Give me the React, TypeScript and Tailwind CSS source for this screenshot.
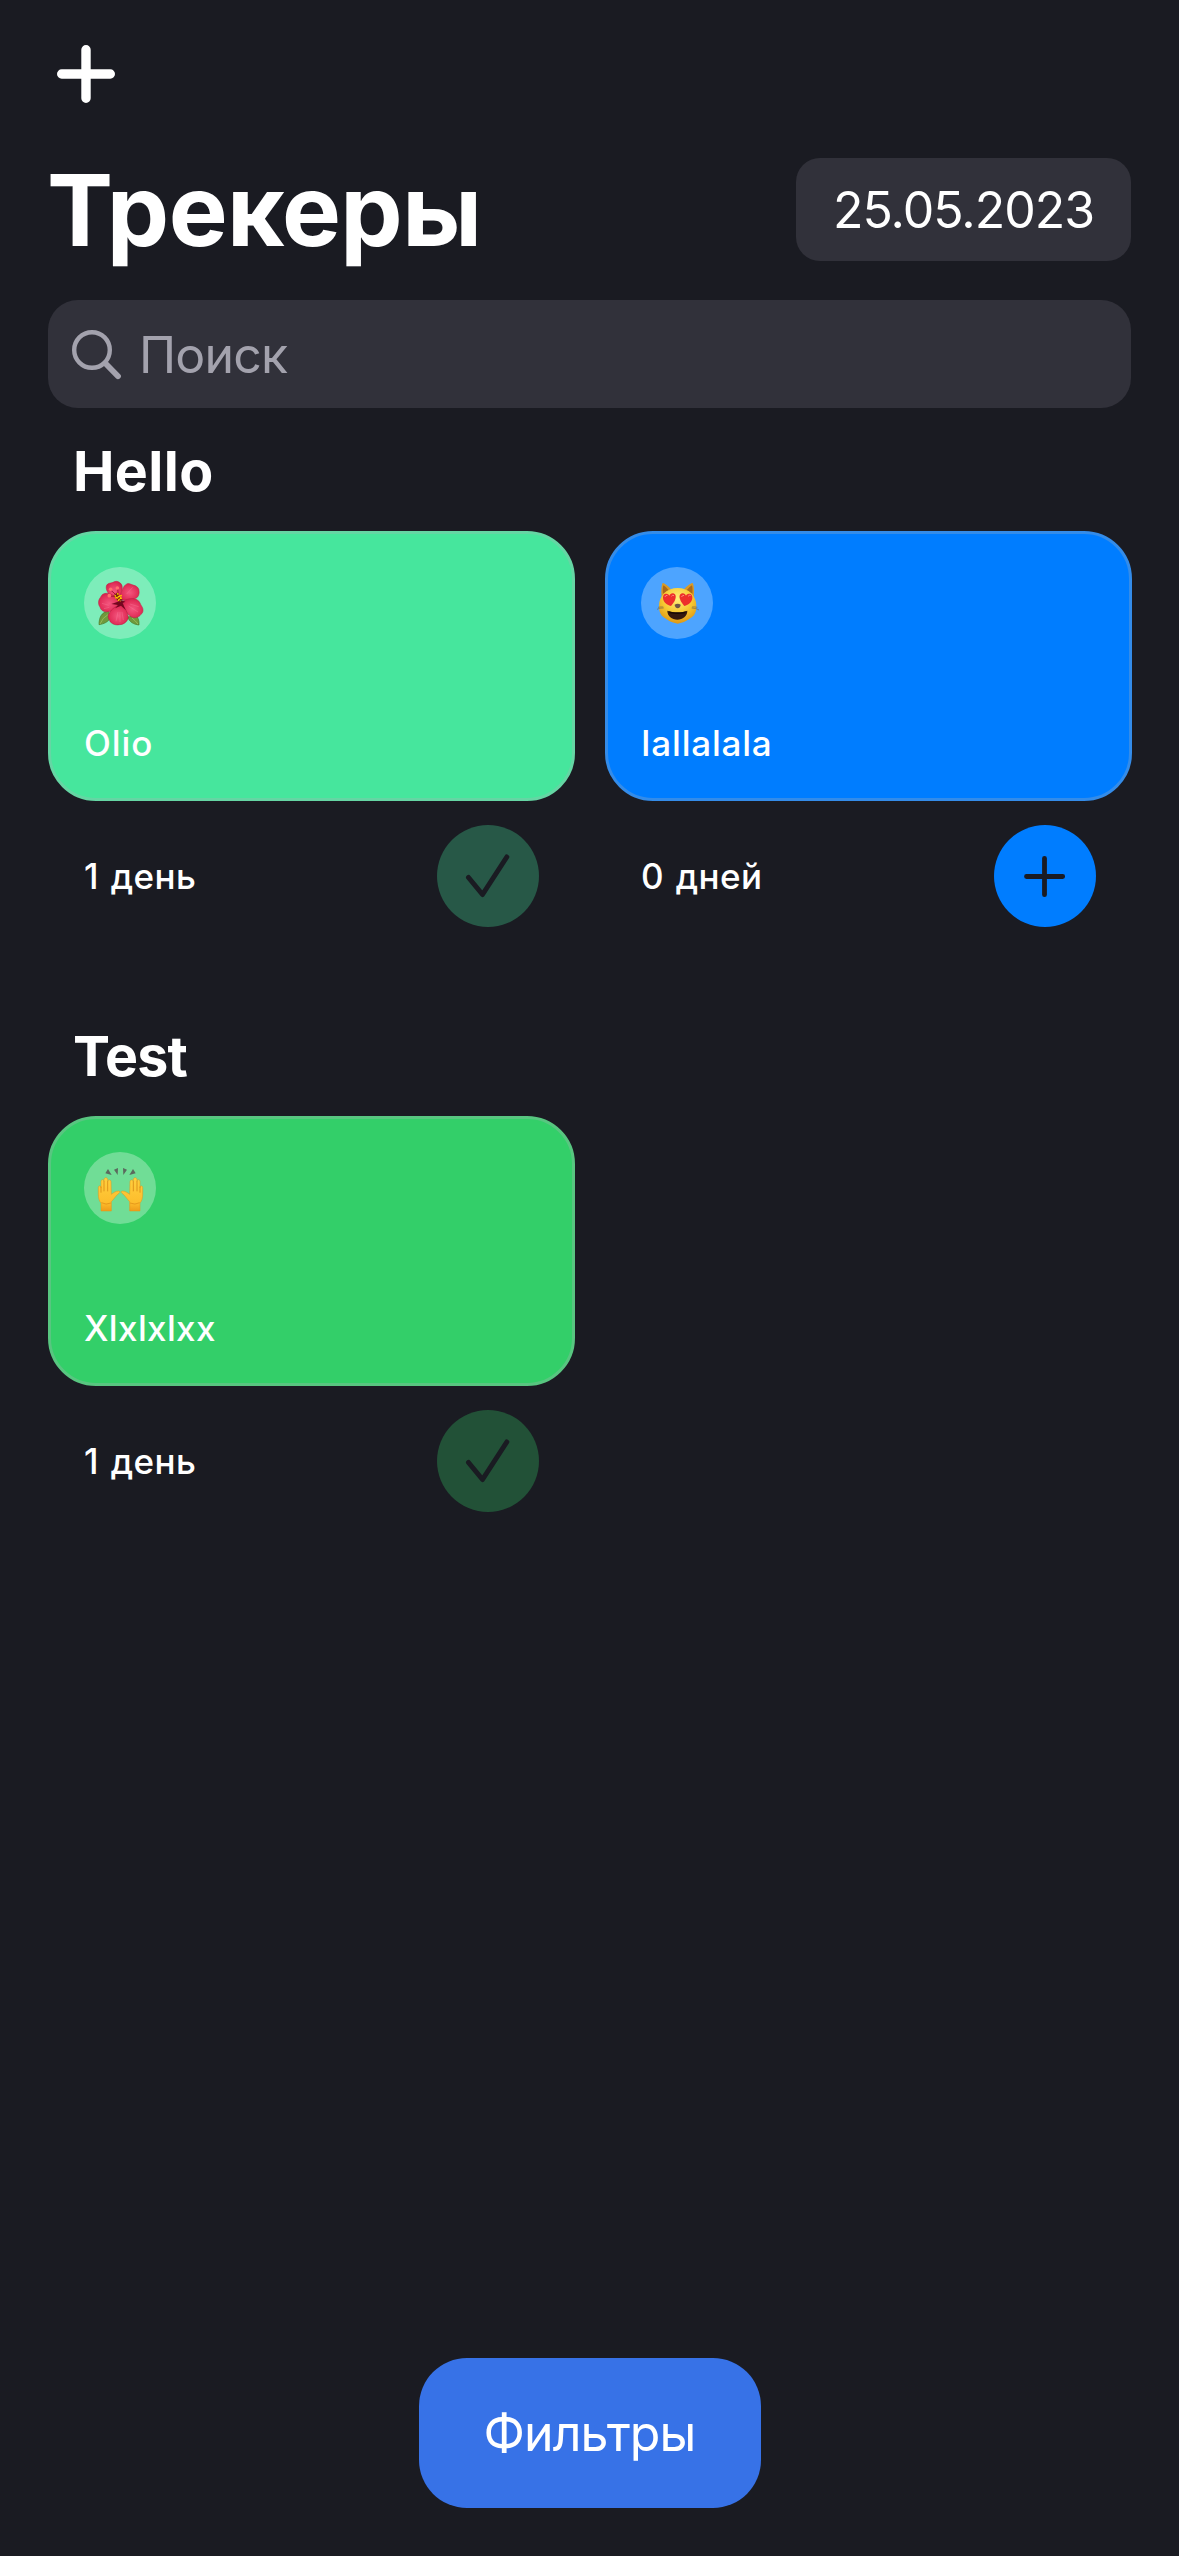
import React from "react";

function Hibiscus() {
  return (
    <svg className="size-full" viewBox="132 141 216 216">
      <defs>
        <radialGradient id="petal" cx="50%" cy="55%" r="60%">
          <stop offset="0" stopColor="#f4567f" />
          <stop offset="0.7" stopColor="#e2305a" />
          <stop offset="1" stopColor="#cf1f49" />
        </radialGradient>
      </defs>
      <path d="M177 314c0-22 8-38 28-40l8 18c-8 14-22 20-36 22z" fill="#6f9a3c" stroke="#4c7526" strokeWidth="2" />
      <path d="M297 315c1-14-3-24-10-28l-24 4c6 16 18 22 34 24z" fill="#6f9a3c" stroke="#4c7526" strokeWidth="2" />
      <path d="M180 312q8-20 24-28M294 312q-8-10-18-18" stroke="#a9c76a" strokeWidth="2" fill="none" />
      <path d="M237 240c-22-4-42-26-38-42 4-10 14-8 20-11 6-4 14-4 19 0 10 6 10 16 7 28z" fill="url(#petal)" stroke="#c31c45" strokeWidth="1.5" />
      <path d="M240 240c2-20 8-44 22-49 6-2 12 3 20 5 8 2 16 9 15 17 2 8-2 18-8 21-14 6-32 8-49 6z" fill="url(#petal)" stroke="#c31c45" strokeWidth="1.5" />
      <path d="M240 250c-10-22-32-34-48-29-8 2-9 10-14 16-4 8-3 18 2 24 2 10 12 16 24 14 14 0 28-10 36-25z" fill="url(#petal)" stroke="#c31c45" strokeWidth="1.5" />
      <path d="M246 246c12-10 34-14 46-6 8 4 8 12 14 20 5 8 4 18-3 23-6 10-18 12-28 8-14-8-24-26-29-45z" fill="url(#petal)" stroke="#c31c45" strokeWidth="1.5" />
      <path d="M243 254c-18 4-34 18-38 32-2 10 4 14 6 20 8 8 18 10 28 8 10 0 18-6 22-12 6-8 4-16 0-24-4-12-10-20-18-24z" fill="url(#petal)" stroke="#b8173e" strokeWidth="1.5" />
      <path d="M214 252l24-8 6-3 12 4-8 4 9 21-14-13-18 8 9-10z" fill="#74061f" />
      <g stroke="#f9819f" strokeWidth="1.5" fill="none" opacity="0.7">
        <path d="M234 276l-6 28M240 276v30M246 276l4 24M266 258l28 18M270 252l26 8M206 256l-20-6M208 262l-16 4M260 222l18-20" />
      </g>
      <path d="M212 210l20 18M208 228l22 2M233 206l2 20" stroke="#a81338" strokeWidth="3" />
      <circle cx="212" cy="208" r="5.5" fill="#ff6f6c" />
      <circle cx="232" cy="204" r="5.5" fill="#ff6f6c" />
      <circle cx="208" cy="227" r="5.5" fill="#ff6f6c" />
      <path d="M226 222l16 20" stroke="#7c1c12" strokeWidth="14" />
      <path d="M224 226l18 18M232 220l14 18M226 234l20-8M234 242l10-10" stroke="#ffc400" strokeWidth="4.5" strokeDasharray="5 3" />
    </svg>
  );
}

function HeartEyesCat() {
  return (
    <svg className="size-full" viewBox="153 141 216 216">
      <defs>
        <radialGradient id="fur" cx="50%" cy="30%" r="72%">
          <stop offset="0" stopColor="#fff07c" />
          <stop offset="0.55" stopColor="#f6c832" />
          <stop offset="1" stopColor="#dc9412" />
        </radialGradient>
      </defs>
      <path d="M215 232c-2-18-1-36 3-43 9 2 20 12 27 22z" fill="#d99a26" />
      <path d="M311 232c2-18 1-36-3-43-10 2-21 12-28 22z" fill="#d99a26" />
      <path d="M219 222c-1-10-1-20 1-26 6 3 12 10 16 15zM307 222c1-10 1-20-1-26-6 3-12 10-16 15z" fill="#a9691a" />
      <path d="M263 204c34 0 56 24 56 54 0 16-4 26-14 34-12 9-28 18-42 19-14-1-30-10-42-19-10-8-14-18-14-34 0-30 22-54 56-54z" fill="url(#fur)" />
      <path d="M201 268q8-5 20-4M204 262q8-2 16-1M327 270q-8-6-22-6M322 262q-8-2-16-1" stroke="#7a6a4c" strokeWidth="2" fill="none" />
      <path d="M243 258c-14-4-23-12-24-24-1-8 4-14 10-13 5 0 8 3 9 6 2-4 6-8 11-7 8 1 10 9 7 17-2 8-7 14-13 21z" fill="#ed2f2c" />
      <path d="M283 258c14-4 23-12 24-24 1-8-4-14-10-13-5 0-8 3-9 6-2-4-6-8-11-7-8 1-10 9-7 17 2 8 7 14 13 21z" fill="#ed2f2c" />
      <path d="M225 230q2-5 6-4M245 228q3-4 6-2M275 230q2-5 6-4M295 228q3-4 6-2" stroke="#ff8a80" strokeWidth="3" fill="none" strokeLinecap="round" />
      <path d="M254 254c5-4 13-4 18 0 0 6-4 10-9 11-5-1-9-5-9-11z" fill="#6e5647" />
      <path d="M232 272c18 6 44 6 60 0 0 16-14 27-30 27s-30-11-30-27z" fill="#35190f" />
      <path d="M236 274c16 5 38 5 52 0l-3 6c-14 3-32 3-46 0z" fill="#190a06" />
    </svg>
  );
}

function RaisedHands() {
  return (
    <svg className="size-full" viewBox="132 426 216 216">
      <defs>
        <linearGradient id="skin" x1="0" y1="0" x2="0" y2="1">
          <stop offset="0" stopColor="#ffcf3f" />
          <stop offset="0.75" stopColor="#fdbd2c" />
          <stop offset="1" stopColor="#ee9c1a" />
        </linearGradient>
        <g id="hand">
          <path
            d="M183 603v-24c-6-6-8-16-8-26v-20c0-7 8-7 8 0v-18c0-8 9-8 9 0v-6c0-8 11-8 11 0v6c0-7 10-7 10 0l1 38c5-4 13-10 22-10 4 1 5 4 1 7-8 5-13 15-23 25v28z"
            fill="url(#skin)"
            stroke="#e0951b"
            strokeWidth="1.5"
          />
          <path d="M183 530v18M192 514v30M203 514v30" stroke="#d98a17" strokeWidth="2.5" fill="none" />
          <path d="M184 578q14 8 29 1" stroke="#e79a1c" strokeWidth="3" fill="none" />
        </g>
      </defs>
      <path d="M204 477l11 18-19-5zM222 479l12-5-1 21zM249 474l12 5-11 16zM279 477l8 13-19 5z" fill="#5b6a5e" />
      <use href="#hand" />
      <use href="#hand" transform="translate(483 0) scale(-1 1)" />
    </svg>
  );
}

function CheckMark() {
  return (
    <svg className="size-full" viewBox="0 0 102 102" fill="none" stroke="#1a1b22" strokeWidth="5" strokeLinecap="round" strokeLinejoin="round">
      <path d="M31.5 52.5L45.5 69.5L69.8 32" />
    </svg>
  );
}

function PlusMark() {
  return (
    <svg className="size-full" viewBox="0 0 102 102" fill="none" stroke="#1a1b22" strokeWidth="4.8" strokeLinecap="round">
      <path d="M50.5 33.3V69.7M32.5 51.5H68.7" />
    </svg>
  );
}

type Tracker = {
  name: string;
  nameClass: string;
  days: string;
  card: string;
  button: string;
  emoji: React.ReactNode;
  done: boolean;
};

function TrackerCell({ t }: { t: Tracker }) {
  return (
    <article>
      <div className={`flex h-[270px] flex-col items-start justify-between rounded-[48px] border-3 px-[33px] pt-[33px] pb-[37px] ${t.card}`}>
        <div className="size-[72px] rounded-full bg-white/30">{t.emoji}</div>
        <div className={`text-[35px] leading-[36px] font-medium ${t.nameClass}`}>{t.name}</div>
      </div>
      <div className="mt-6 flex h-[102px] items-center justify-between px-9">
        <span className="text-[35px] leading-[36px] font-medium tracking-[0.4px] [word-spacing:2px]">{t.days}</span>
        <button className={`size-[102px] rounded-full ${t.button}`}>{t.done ? <CheckMark /> : <PlusMark />}</button>
      </div>
    </article>
  );
}

const sections: { title: string; titleClass: string; items: Tracker[] }[] = [
  {
    title: "Hello",
    titleClass: "tracking-[0.4px]",
    items: [
      {
        name: "Olio",
        nameClass: "tracking-[0.9px]",
        days: "1 день",
        card: "bg-[#46e69d] border-[#65d6a4]",
        button: "bg-[#275847]",
        emoji: <Hibiscus />,
        done: true,
      },
      {
        name: "Iallalala",
        nameClass: "tracking-[0.8px]",
        days: "0 дней",
        card: "bg-[#007dff] border-[#348ce9]",
        button: "bg-[#007dff]",
        emoji: <HeartEyesCat />,
        done: false,
      },
    ],
  },
  {
    title: "Test",
    titleClass: "tracking-[-0.8px]",
    items: [
      {
        name: "Xlxlxlxx",
        nameClass: "tracking-[0.35px]",
        days: "1 день",
        card: "bg-[#33cf69] border-[#58c680]",
        button: "bg-[#225137]",
        emoji: <RaisedHands />,
        done: true,
      },
    ],
  },
];

export default function App() {
  return (
    <main className="flex h-[2556px] w-[1179px] flex-col bg-[#1a1b22] px-12 font-['Inter',sans-serif] text-white">
      <button className="mt-[44px] ml-[8px] size-[60px]">
        <svg className="size-full" viewBox="0 0 60 60" stroke="white" strokeWidth="9.4" strokeLinecap="round">
          <path d="M30 5.7V54.3M5.7 30H54.3" />
        </svg>
      </button>

      <header className="mt-[54px] flex h-[103px] items-center justify-between">
        <h1 className="-ml-px text-[99px] leading-[100px] font-bold tracking-[-0.6px]">Трекеры</h1>
        <div className="flex h-[103px] w-[335px] items-center justify-center rounded-[24px] bg-[#31313a] text-[50px] leading-[60px] tracking-[-1px]">
          25.05.2023
        </div>
      </header>

      <div className="mt-[39px] flex h-[108px] items-center rounded-[30px] bg-[#31313a] pl-6 text-[#a3a2ad]">
        <svg className="mt-0.5 size-[50px]" viewBox="0 0 50 50" fill="none" stroke="currentColor" strokeLinecap="round">
          <circle cx="20" cy="20" r="17.8" strokeWidth="4.4" />
          <path d="M33.3 33.3L46 46.2" strokeWidth="5.8" />
        </svg>
        <span className="mt-px ml-[17px] text-[50px] leading-[60px] tracking-[-0.8px]">Поиск</span>
      </div>

      {sections.map((s) => (
        <section key={s.title} className="mb-[66px]">
          <h2 className={`mt-[33px] mb-[30px] pl-[25px] text-[55.5px] leading-[60px] font-bold ${s.titleClass}`}>{s.title}</h2>
          <div className="grid w-[1084px] grid-cols-2 gap-[30px]">
            {s.items.map((t) => (
              <TrackerCell key={t.name} t={t} />
            ))}
          </div>
        </section>
      ))}

      <button className="mt-auto mb-12 flex h-[150px] w-[342px] items-center justify-center self-center rounded-[48px] bg-[#3772e7] text-[50px] leading-[60px] tracking-[-0.9px]">
        Фильтры
      </button>
    </main>
  );
}
